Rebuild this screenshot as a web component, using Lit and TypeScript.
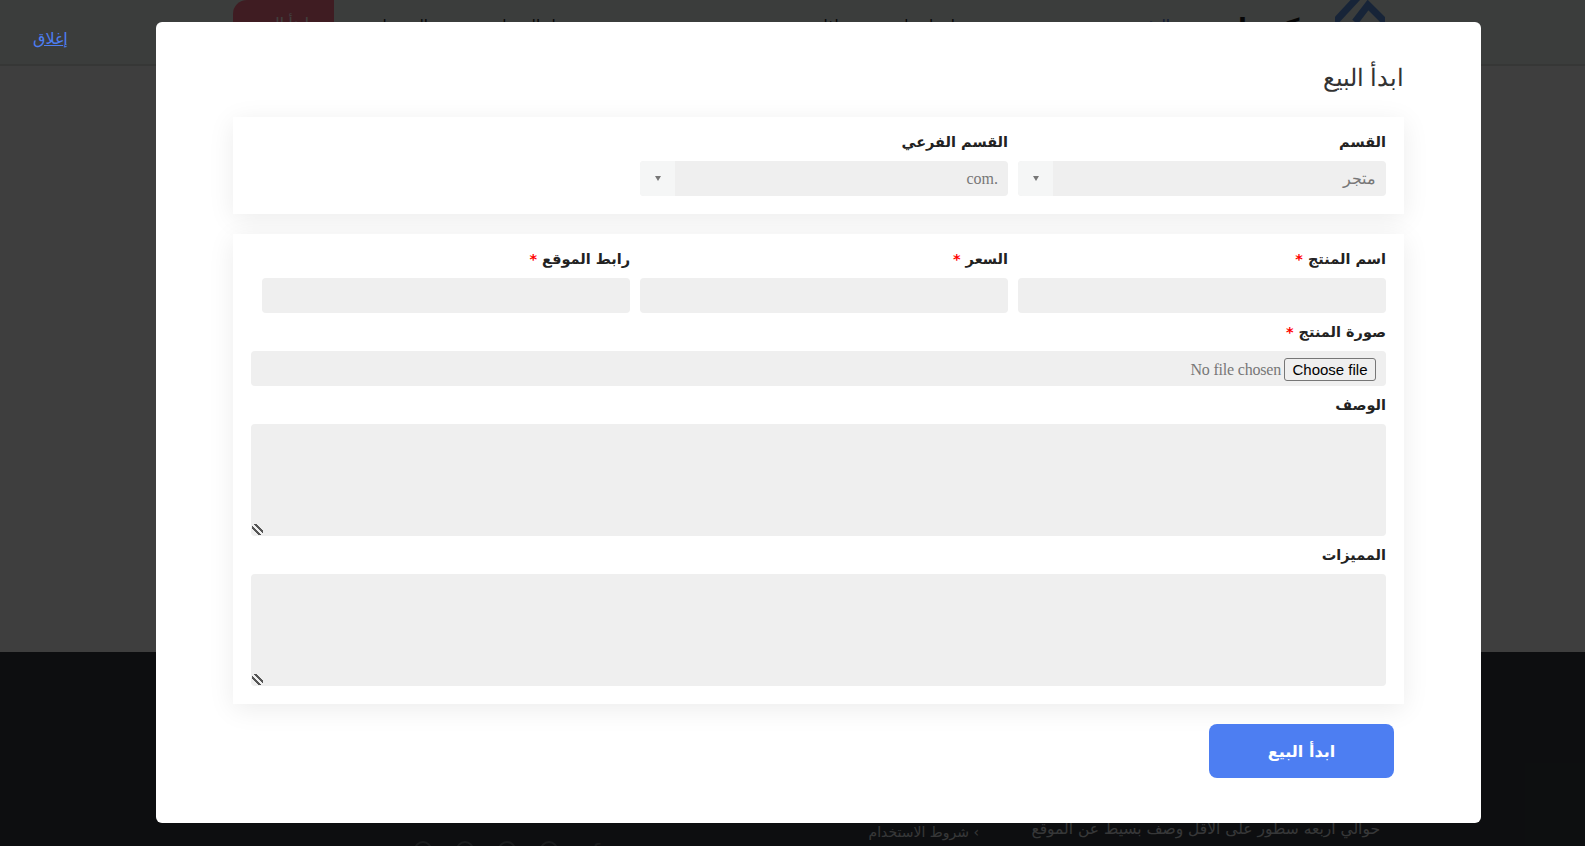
import { LitElement, html, css } from 'lit';
import { customElement } from 'lit/decorators.js';

@customElement('app-root')
export class AppRoot extends LitElement {
  static styles = css`
    :host {
      display: block;
      height: 100vh;
      min-height: 846px;
      position: relative;
      overflow: hidden;
      font-family: "DejaVu Sans", sans-serif;
      background: #fff;
    }

    /* page behind the modal */
    .page {
      height: 846px;
      display: flex;
      flex-direction: column;
      direction: rtl;
    }
    .top {
      height: 64px;
      border-bottom: 2px solid #d6d9d6;
      background: #e9f3ed;
      display: flex;
      align-items: flex-start;
      padding-right: 200px;
    }
    .logo {
      margin-top: -8px;
      width: 50px;
      height: 50px;
      flex: none;
    }
    .brand {
      margin: 8px 10px 0 0;
      width: 86px;
      flex: none;
      font-size: 26px;
      font-weight: 700;
      color: #1c1c1c;
      line-height: 40px;
      white-space: nowrap;
    }
    .nav {
      display: flex;
      flex: none;
      font-size: 15px;
      line-height: 20px;
      padding-top: 15px;
      color: #222;
      margin-right: 69px;
    }
    .nav span {
      white-space: nowrap;
      flex: none;
    }
    .nav .home { color: #4a6fd0; width: 113px; }
    .nav .about { width: 102px; }
    .nav .contact { width: 108px; }
    .nav .what { width: 259px; }
    .nav .login { width: 160px; }
    .nav .reg { width: 94px; }
    .start {
      background: #fc7088;
      width: 101px;
      height: 64px;
      border-radius: 0 0 0 14px;
      border-top-left-radius: 14px;
      color: #fff;
      font-size: 15px;
      text-align: center;
      line-height: 46px;
      flex: none;
    }
    .main {
      flex: 1;
      background: #f8f8f8;
    }
    .footer {
      height: 194px;
      background: #343a40;
      color: #d8dade;
      font-size: 14px;
      display: flex;
      padding: 163px 205px 0 0;
      box-sizing: border-box;
    }
    .about-text {
      width: 401px;
      flex: none;
      font-size: 15.5px;
      line-height: 28px;
    }
    .links {
      width: 379px;
      flex: none;
      padding-top: 7px;
      line-height: 20px;
    }
    .socials {
      display: flex;
      gap: 24px;
      padding-top: 26px;
      color: #6a6f75;
      font-size: 22px;
      line-height: 22px;
    }
    .socials span {
      width: 18px;
    }
    .socials i {
      width: 18px;
      height: 18px;
      box-sizing: border-box;
      border-radius: 50%;
      border: 2px solid #6a6f75;
    }

    .backdrop {
      position: absolute;
      inset: 0;
      background: rgba(0, 0, 0, 0.75);
    }
    .close {
      position: absolute;
      left: 33px;
      top: 29px;
      color: #4d7ef2;
      font-size: 16px;
      line-height: 20px;
      text-decoration: underline;
    }

    /* modal */
    .modal {
      position: absolute;
      left: 156px;
      top: 22px;
      width: 1325px;
      height: 801px;
      box-sizing: border-box;
      padding: 36px 77px 0;
      background: #fff;
      border-radius: 6px;
      direction: rtl;
    }
    h2 {
      margin: 0 0 19px;
      font-family: "Liberation Serif", serif;
      font-weight: 400;
      font-size: 24px;
      line-height: 40px;
      color: #333;
    }
    .panel {
      background: #fff;
      box-shadow: 0 5px 25px rgba(0, 0, 0, 0.08);
      padding: 16px 18px 8px;
      margin-bottom: 20px;
    }
    .row {
      display: grid;
      grid-template-columns: repeat(3, 378px);
    }
    .cell {
      padding-left: 10px;
    }
    .field {
      margin-bottom: 10px;
    }
    label {
      display: block;
      height: 28px;
      font-size: 14.5px;
      font-weight: 700;
      line-height: 18px;
      color: #222;
    }
    label b {
      color: #f00;
      font-weight: 700;
    }
    input[type='text'],
    textarea,
    .select,
    .file {
      display: block;
      box-sizing: border-box;
      width: 100%;
      border: 0;
      border-radius: 4px;
      background: #efefef;
      margin: 0;
    }
    input[type='text'] {
      height: 35px;
    }
    .select {
      height: 35px;
      display: flex;
      overflow: hidden;
    }
    .select .value {
      flex: 1;
      padding: 0 10px;
      font-family: "Liberation Serif", serif;
      font-size: 16px;
      line-height: 35px;
      color: #777;
    }
    .select .arrow {
      width: 35px;
      flex: none;
      background: #f5f6f6;
      display: flex;
      align-items: center;
      justify-content: center;
    }
    .file {
      height: 35px;
      padding: 7px 10px 5px;
      display: flex;
      align-items: center;
      gap: 3px;
      font-family: "Liberation Serif", serif;
      font-size: 16px;
      letter-spacing: -0.2px;
      color: #777;
    }
    .file button {
      width: 92px;
      height: 23px;
      padding: 0;
      border: 1px solid #767676;
      border-radius: 3px;
      background: #efefef;
      color: #000;
      font-family: "Liberation Sans", sans-serif;
      font-size: 15px;
      letter-spacing: 0;
    }
    textarea {
      height: 112px;
      resize: vertical;
      outline: none;
    }
    textarea::-webkit-resizer {
      background: linear-gradient(
          45deg,
          transparent 0 30%,
          #555 30% 42%,
          transparent 42% 58%,
          #555 58% 70%,
          transparent 70%
        )
        left 1px bottom 1px / 11px 11px no-repeat;
    }
    .actions {
      display: flex;
      padding-right: 10px;
    }
    .submit {
      width: 185px;
      height: 54px;
      border: 0;
      border-radius: 8px;
      background: #4d7ef2;
      color: #fff;
      font-family: "DejaVu Sans", sans-serif;
      font-size: 16px;
      font-weight: 700;
    }
  `;

  private arrow() {
    return html`<svg width="6" height="5" viewBox="0 0 6 5"><path d="M0 0h6L3 5z" fill="#777"/></svg>`;
  }

  render() {
    return html`
      <div class="page">
        <div class="top">
          <svg class="logo" viewBox="0 0 50 50" fill="none" stroke="#5d90e0" stroke-width="7">
            <path d="M0 30 L24 4"/>
            <path d="M20 30 L33 13 L50 30"/>
          </svg>
          <div class="brand">سكربتات</div>
          <div class="nav">
            <span class="home">الرئيسية</span>
            <span class="about">من نحن</span>
            <span class="contact">اتصل بنا</span>
            <span class="what">ماذا نبيع</span>
            <span class="login">تسجيل الدخول</span>
            <span class="reg">التسجيل</span>
          </div>
          <div class="start">ابدأ البيع</div>
        </div>
        <div class="main"></div>
        <div class="footer">
          <div class="about-text">حوالي اربعه سطور على الاقل وصف بسيط عن الموقع<br />وصف بسيط عن الموقع</div>
          <div class="links">› شروط الاستخدام</div>
          <div class="socials"><span>f</span><i></i><i></i><i></i><i></i></div>
        </div>
      </div>
      <div class="backdrop">
        <a class="close" dir="rtl">إغلاق</a>
      </div>
      <div class="modal">
        <h2>ابدأ البيع</h2>
        <div class="panel">
          <div class="row">
            <div class="cell field">
              <label>القسم</label>
              <div class="select"><div class="value">متجر</div><div class="arrow">${this.arrow()}</div></div>
            </div>
            <div class="cell field">
              <label>القسم الفرعي</label>
              <div class="select"><div class="value">.com</div><div class="arrow">${this.arrow()}</div></div>
            </div>
          </div>
        </div>
        <div class="panel">
          <div class="row">
            <div class="cell field"><label>اسم المنتج <b>*</b></label><input type="text" /></div>
            <div class="cell field"><label>السعر <b>*</b></label><input type="text" /></div>
            <div class="cell field"><label>رابط الموقع <b>*</b></label><input type="text" /></div>
          </div>
          <div class="field">
            <label>صورة المنتج <b>*</b></label>
            <div class="file"><button type="button">Choose file</button><span>No file chosen</span></div>
          </div>
          <div class="field"><label>الوصف</label><textarea></textarea></div>
          <div class="field"><label>المميزات</label><textarea></textarea></div>
        </div>
        <div class="actions"><button class="submit">ابدأ البيع</button></div>
      </div>
    `;
  }
}
